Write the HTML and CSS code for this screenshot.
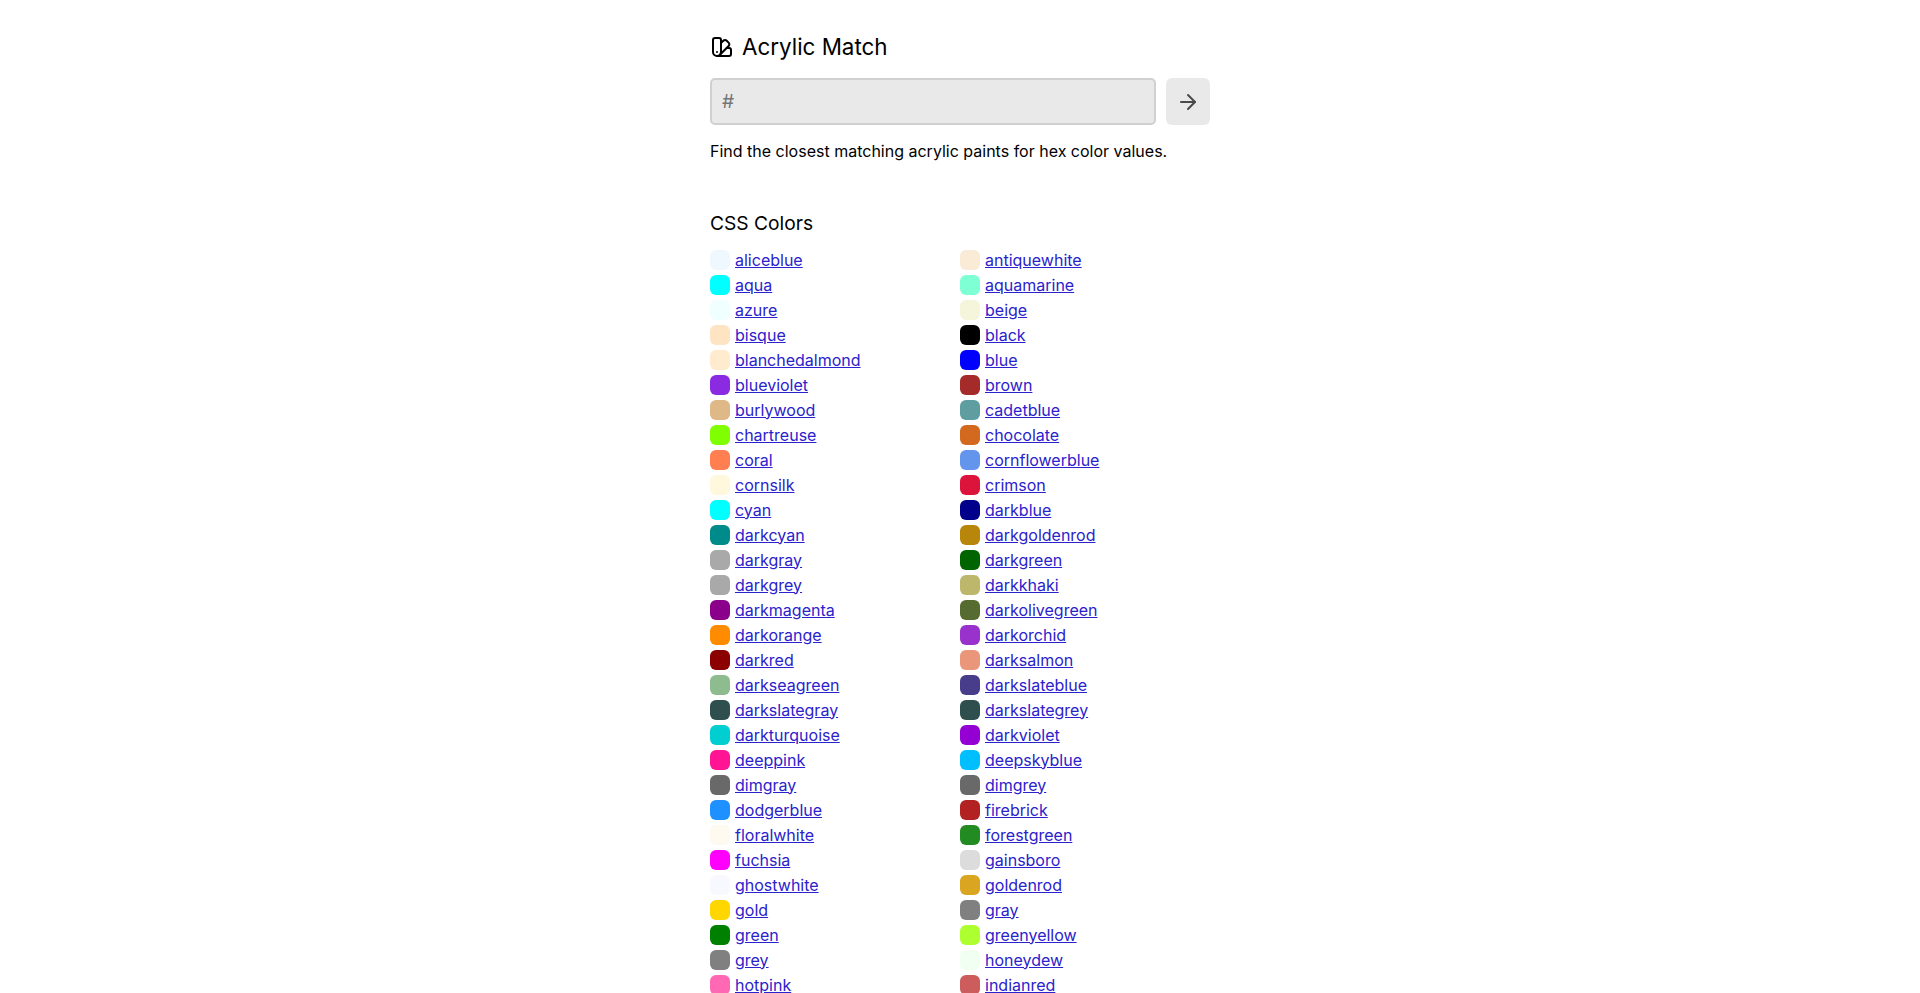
FILE: index.html
```html
<!DOCTYPE html>
<html lang="en">
<head>
<meta charset="utf-8">
<title>Acrylic Match</title>
<link rel="stylesheet" href="styles.css">
</head>
<body>
<main class="page">
<header class="brand">
<svg class="brand-icon" viewBox="0 0 24 24" fill="none" stroke="currentColor" stroke-width="2" stroke-linecap="round" stroke-linejoin="round"><path d="M11 17a4 4 0 0 1-8 0V5a2 2 0 0 1 2-2h4a2 2 0 0 1 2 2Z"/><path d="M16.7 13H19a2 2 0 0 1 2 2v4a2 2 0 0 1-2 2H7"/><path d="M7 17h.01"/><path d="m11 8 2.3-2.3a2.4 2.4 0 0 1 3.404.004L18.6 7.6a2.4 2.4 0 0 1 .026 3.434L9.9 19.8"/></svg>
<h1 class="title">Acrylic Match</h1>
</header>
<form class="search">
<input class="search-input" type="text" placeholder="#">
<button class="search-button" type="button"><svg class="arrow" viewBox="0 0 24 24" fill="none" stroke="currentColor" stroke-width="2" stroke-linecap="round" stroke-linejoin="round"><path d="M5 12h14"/><path d="m12 5 7 7-7 7"/></svg></button>
</form>
<p class="intro">Find the closest matching acrylic paints for hex color values.</p>
<h2 class="section-title">CSS Colors</h2>
<ul class="colors">
<li class="color"><span class="swatch" style="background:aliceblue"></span><a href="#">aliceblue</a></li>
<li class="color"><span class="swatch" style="background:antiquewhite"></span><a href="#">antiquewhite</a></li>
<li class="color"><span class="swatch" style="background:aqua"></span><a href="#">aqua</a></li>
<li class="color"><span class="swatch" style="background:aquamarine"></span><a href="#">aquamarine</a></li>
<li class="color"><span class="swatch" style="background:azure"></span><a href="#">azure</a></li>
<li class="color"><span class="swatch" style="background:beige"></span><a href="#">beige</a></li>
<li class="color"><span class="swatch" style="background:bisque"></span><a href="#">bisque</a></li>
<li class="color"><span class="swatch" style="background:black"></span><a href="#">black</a></li>
<li class="color"><span class="swatch" style="background:blanchedalmond"></span><a href="#">blanchedalmond</a></li>
<li class="color"><span class="swatch" style="background:blue"></span><a href="#">blue</a></li>
<li class="color"><span class="swatch" style="background:blueviolet"></span><a href="#">blueviolet</a></li>
<li class="color"><span class="swatch" style="background:brown"></span><a href="#">brown</a></li>
<li class="color"><span class="swatch" style="background:burlywood"></span><a href="#">burlywood</a></li>
<li class="color"><span class="swatch" style="background:cadetblue"></span><a href="#">cadetblue</a></li>
<li class="color"><span class="swatch" style="background:chartreuse"></span><a href="#">chartreuse</a></li>
<li class="color"><span class="swatch" style="background:chocolate"></span><a href="#">chocolate</a></li>
<li class="color"><span class="swatch" style="background:coral"></span><a href="#">coral</a></li>
<li class="color"><span class="swatch" style="background:cornflowerblue"></span><a href="#">cornflowerblue</a></li>
<li class="color"><span class="swatch" style="background:cornsilk"></span><a href="#">cornsilk</a></li>
<li class="color"><span class="swatch" style="background:crimson"></span><a href="#">crimson</a></li>
<li class="color"><span class="swatch" style="background:cyan"></span><a href="#">cyan</a></li>
<li class="color"><span class="swatch" style="background:darkblue"></span><a href="#">darkblue</a></li>
<li class="color"><span class="swatch" style="background:darkcyan"></span><a href="#">darkcyan</a></li>
<li class="color"><span class="swatch" style="background:darkgoldenrod"></span><a href="#">darkgoldenrod</a></li>
<li class="color"><span class="swatch" style="background:darkgray"></span><a href="#">darkgray</a></li>
<li class="color"><span class="swatch" style="background:darkgreen"></span><a href="#">darkgreen</a></li>
<li class="color"><span class="swatch" style="background:darkgrey"></span><a href="#">darkgrey</a></li>
<li class="color"><span class="swatch" style="background:darkkhaki"></span><a href="#">darkkhaki</a></li>
<li class="color"><span class="swatch" style="background:darkmagenta"></span><a href="#">darkmagenta</a></li>
<li class="color"><span class="swatch" style="background:darkolivegreen"></span><a href="#">darkolivegreen</a></li>
<li class="color"><span class="swatch" style="background:darkorange"></span><a href="#">darkorange</a></li>
<li class="color"><span class="swatch" style="background:darkorchid"></span><a href="#">darkorchid</a></li>
<li class="color"><span class="swatch" style="background:darkred"></span><a href="#">darkred</a></li>
<li class="color"><span class="swatch" style="background:darksalmon"></span><a href="#">darksalmon</a></li>
<li class="color"><span class="swatch" style="background:darkseagreen"></span><a href="#">darkseagreen</a></li>
<li class="color"><span class="swatch" style="background:darkslateblue"></span><a href="#">darkslateblue</a></li>
<li class="color"><span class="swatch" style="background:darkslategray"></span><a href="#">darkslategray</a></li>
<li class="color"><span class="swatch" style="background:darkslategrey"></span><a href="#">darkslategrey</a></li>
<li class="color"><span class="swatch" style="background:darkturquoise"></span><a href="#">darkturquoise</a></li>
<li class="color"><span class="swatch" style="background:darkviolet"></span><a href="#">darkviolet</a></li>
<li class="color"><span class="swatch" style="background:deeppink"></span><a href="#">deeppink</a></li>
<li class="color"><span class="swatch" style="background:deepskyblue"></span><a href="#">deepskyblue</a></li>
<li class="color"><span class="swatch" style="background:dimgray"></span><a href="#">dimgray</a></li>
<li class="color"><span class="swatch" style="background:dimgrey"></span><a href="#">dimgrey</a></li>
<li class="color"><span class="swatch" style="background:dodgerblue"></span><a href="#">dodgerblue</a></li>
<li class="color"><span class="swatch" style="background:firebrick"></span><a href="#">firebrick</a></li>
<li class="color"><span class="swatch" style="background:floralwhite"></span><a href="#">floralwhite</a></li>
<li class="color"><span class="swatch" style="background:forestgreen"></span><a href="#">forestgreen</a></li>
<li class="color"><span class="swatch" style="background:fuchsia"></span><a href="#">fuchsia</a></li>
<li class="color"><span class="swatch" style="background:gainsboro"></span><a href="#">gainsboro</a></li>
<li class="color"><span class="swatch" style="background:ghostwhite"></span><a href="#">ghostwhite</a></li>
<li class="color"><span class="swatch" style="background:goldenrod"></span><a href="#">goldenrod</a></li>
<li class="color"><span class="swatch" style="background:gold"></span><a href="#">gold</a></li>
<li class="color"><span class="swatch" style="background:gray"></span><a href="#">gray</a></li>
<li class="color"><span class="swatch" style="background:green"></span><a href="#">green</a></li>
<li class="color"><span class="swatch" style="background:greenyellow"></span><a href="#">greenyellow</a></li>
<li class="color"><span class="swatch" style="background:grey"></span><a href="#">grey</a></li>
<li class="color"><span class="swatch" style="background:honeydew"></span><a href="#">honeydew</a></li>
<li class="color"><span class="swatch" style="background:hotpink"></span><a href="#">hotpink</a></li>
<li class="color"><span class="swatch" style="background:indianred"></span><a href="#">indianred</a></li>
</ul>
</main>
</body>
</html>
```

FILE: styles.css
```css
* { box-sizing: border-box; }
html, body { margin: 0; padding: 0; background: #fff; }
body { font-family: Inter, "Noto Sans", sans-serif; font-size: 16px; color: #000; }
.page { width: 500px; margin: 0 auto; padding-top: 32px; }
.brand { display: flex; align-items: center; gap: 8px; height: 30px; }
.brand-icon { width: 24px; height: 24px; flex: none; }
.title { margin: 0; font-size: 22.4px; font-weight: 400; line-height: 30px; }
.search { display: flex; gap: 10px; margin-top: 16px; height: 47px; }
.search-input { width: 446px; height: 47px; padding: 0 10px 2px; border: 2px solid #d0d0d0; border-radius: 5px; background: #e9e9e9; font: 19.2px Inter, sans-serif; color: #000; outline: none; }
.search-input::placeholder { color: #757575; opacity: 1; }
.search-button { display: flex; align-items: center; justify-content: center; width: 44px; height: 47px; padding: 0; border: 0; border-radius: 6px; background: #e9e9e9; color: #4a4a4a; }
.arrow { width: 24px; height: 24px; }
.intro { margin: 14px 0 0; line-height: 24px; }
.section-title { margin: 48px 0 0; font-size: 19.2px; font-weight: 400; line-height: 24px; }
.colors { list-style: none; margin: 12px 0 0; padding: 0; display: grid; grid-template-columns: 250px 250px; grid-auto-rows: 25px; }
.color { display: flex; align-items: center; gap: 5px; line-height: 20px; }
.swatch { width: 20px; height: 20px; border-radius: 6px; flex: none; }
a { color: #2a22cc; text-decoration: underline; }
```
